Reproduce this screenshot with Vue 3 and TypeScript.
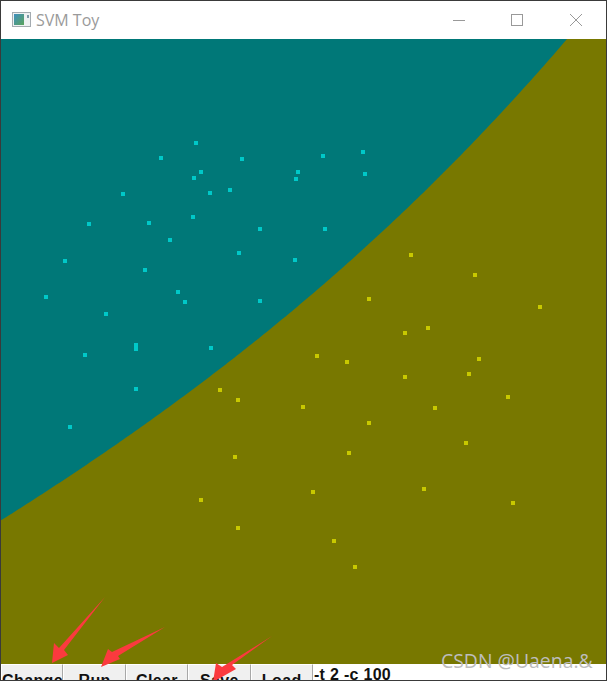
<script setup lang="ts">
// Decision boundary of the classifier, as a smooth cubic through the picture.
const curveY = (x: number): number =>
  521 - (0.5903 * x + 0.000458 * x * x + 3e-7 * x * (x - 230) * (x - 567))
const boundary: [number, number][] = []
for (let x = 0; x <= 567; x += 3) boundary.push([x, Math.max(39, curveY(x))])
boundary.push([567, 39], [607, 39])
const olive = `${boundary.map(p => p.join(',')).join(' ')} 607,664 0,664`
const cyan: [number, number][] = [[196,143],[161,158],[242,159],[323,156],[363,152],[201,172],[194,178],[298,172],[296,179],[365,174],[123,194],[210,193],[230,190],[193,217],[89,224],[149,223],[260,229],[325,229],[170,240],[239,253],[65,261],[295,260],[145,270],[46,297],[178,292],[185,302],[260,301],[106,314],[136,345],[136,349],[211,348],[85,355],[136,389],[70,427]]
const yellow: [number, number][] = [[411,255],[475,275],[369,299],[540,307],[428,328],[405,333],[317,356],[347,362],[479,359],[469,374],[405,377],[220,390],[238,400],[303,407],[508,397],[435,408],[369,423],[466,443],[349,453],[235,457],[424,489],[313,492],[201,500],[513,503],[238,528],[334,541],[355,567]]
const buttons = ['Change', 'Run', 'Clear', 'Save', 'Load']
</script>

<template>
  <div class="window">
    <header class="titlebar">
      <svg class="app-icon" width="20" height="16" viewBox="0 0 20 16">
        <defs>
          <linearGradient id="ic" x1="0" y1="0" x2="1" y2="1">
            <stop offset="0" stop-color="#3f8fc0" />
            <stop offset="1" stop-color="#5aa35a" />
          </linearGradient>
        </defs>
        <rect x="0.5" y="0.5" width="18" height="14" fill="#eef1f2" stroke="#a4abb0" />
        <rect x="2" y="2" width="10" height="11" fill="url(#ic)" />
        <rect x="15" y="3" width="2" height="3" fill="#7f9aa8" />
      </svg>
      <span class="title">SVM Toy</span>
      <div class="controls">
        <svg width="153" height="16" viewBox="0 0 153 16">
          <path d="M0 8.5H12" stroke="#999" fill="none" />
          <rect x="58.5" y="2.5" width="11" height="11" stroke="#999" fill="none" />
          <path d="M117 2L129 14M129 2L117 14" stroke="#999" fill="none" />
        </svg>
      </div>
    </header>

    <svg class="canvas" width="605" height="625" viewBox="1 39 605 625">
      <rect x="0" y="39" width="607" height="625" fill="#007878" />
      <polygon :points="olive" fill="#787800" />
      <g shape-rendering="crispEdges">
        <rect v-for="(p, i) in cyan" :key="'c' + i" :x="p[0] - 2" :y="p[1] - 2" width="4" height="4" fill="#00c8c8" />
        <rect v-for="(p, i) in yellow" :key="'y' + i" :x="p[0] - 2" :y="p[1] - 2" width="4" height="4" fill="#c8c800" />
      </g>
    </svg>

    <div class="toolbar">
      <button v-for="b in buttons" :key="b" class="btn" type="button">{{ b }}</button>
      <div class="field">-t 2 -c 100</div>
    </div>

    <svg class="arrows" width="607" height="681" viewBox="0 0 607 681">
      <g fill="#fb3a3e">
        <polygon points="105,597 64,650 68,655 52,663 54,643 59,648" />
        <polygon points="165,627 118,656 120,659 101,667 108,649 112,652" />
        <polygon points="272,636 232,665 236,669 213,682 216,663 222,667" />
      </g>
    </svg>

    <div class="watermark">CSDN @Uaena.&amp;</div>
  </div>
</template>

<style>
html, body { margin: 0; padding: 0; background: #fff; }
</style>

<style scoped>
.window {
  position: relative;
  box-sizing: border-box;
  width: 607px;
  height: 681px;
  overflow: hidden;
  border: 1px solid #3a3a3a;
  background: #fff;
  display: flex;
  flex-direction: column;
}
.titlebar {
  flex: 0 0 38px;
  display: flex;
  align-items: center;
  padding-left: 11px;
  background: #fff;
}
.app-icon { margin-right: 4px; margin-top: -1px; }
.title {
  font-family: "Open Sans", "Noto Sans", sans-serif;
  font-size: 16px;
  color: #9a9a9a;
  margin-top: -1px;
}
.controls {
  margin-left: auto;
  display: flex;
  margin-top: -1px;
}
.canvas { display: block; flex: 0 0 625px; }
.toolbar {
  flex: 0 0 32px;
  display: flex;
  align-items: flex-start;
  background: #fff;
}
.btn {
  flex: 0 0 62.4px;
  box-sizing: border-box;
  height: 32px;
  margin: 0;
  padding: 0;
  border: 0;
  border-left: 1px solid #fff;
  border-top: 1px solid #fff;
  border-right: 1px solid #a8a8a8;
  background: #f0f0f0;
  font-family: "Liberation Sans", Arial, sans-serif;
  font-weight: 700;
  font-size: 16px;
  letter-spacing: 0.4px;
  color: #111;
  text-align: center;
  line-height: 18px;
  white-space: nowrap;
  overflow: hidden;
}
.field {
  flex: 1;
  padding: 2px 0 0 1px;
  font-family: "Liberation Sans", Arial, sans-serif;
  font-weight: 700;
  font-size: 16px;
  line-height: 18px;
  letter-spacing: 0.3px;
  color: #111;
  white-space: nowrap;
}
.arrows {
  position: absolute;
  left: -1px;
  top: -1px;
  pointer-events: none;
}
.watermark {
  position: absolute;
  left: 440px;
  top: 648px;
  font-family: "Open Sans", "Noto Sans", sans-serif;
  font-size: 19.4px;
  line-height: 24px;
  color: #bdbdbd;
  white-space: nowrap;
}
</style>
